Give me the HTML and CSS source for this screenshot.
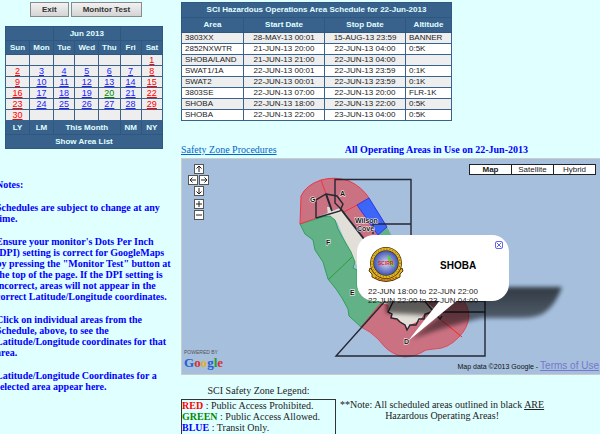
FILE: index.html
```html
<!DOCTYPE html>
<html lang="en">
<head>
  <meta charset="UTF-8">
  <meta name="viewport" content="width=device-width, initial-scale=1.0">
  <title>SCI Hazardous Operations Area Schedule</title>
  <link rel="stylesheet" href="styles.css">
</head>
<body>
  <div class="page">
    <div class="sidebar">
      <div class="buttons">
        <button type="button">Exit</button>
        <button type="button">Monitor Test</button>
      </div>

      <table class="calendar">
        <colgroup>
          <col class="wide"><col class="wide"><col><col class="wide"><col><col><col>
        </colgroup>
        <thead>
          <tr><th colspan="2"></th><th colspan="3">Jun 2013</th><th colspan="2"></th></tr>
          <tr><th>Sun</th><th>Mon</th><th>Tue</th><th>Wed</th><th>Thu</th><th>Fri</th><th>Sat</th></tr>
        </thead>
        <tbody>
          <tr><td></td><td></td><td></td><td></td><td></td><td></td><td><a class="weekend" href="#">1</a></td></tr>
          <tr><td><a class="weekend" href="#">2</a></td><td><a href="#">3</a></td><td><a href="#">4</a></td><td><a href="#">5</a></td><td><a href="#">6</a></td><td><a href="#">7</a></td><td><a class="weekend" href="#">8</a></td></tr>
          <tr><td><a class="weekend" href="#">9</a></td><td><a href="#">10</a></td><td><a href="#">11</a></td><td><a href="#">12</a></td><td><a href="#">13</a></td><td><a href="#">14</a></td><td><a class="weekend" href="#">15</a></td></tr>
          <tr><td><a class="weekend" href="#">16</a></td><td><a href="#">17</a></td><td><a href="#">18</a></td><td><a href="#">19</a></td><td><a class="today" href="#">20</a></td><td><a href="#">21</a></td><td><a class="weekend" href="#">22</a></td></tr>
          <tr><td><a class="weekend" href="#">23</a></td><td><a href="#">24</a></td><td><a href="#">25</a></td><td><a href="#">26</a></td><td><a href="#">27</a></td><td><a href="#">28</a></td><td><a class="weekend" href="#">29</a></td></tr>
          <tr><td><a class="weekend" href="#">30</a></td><td></td><td></td><td></td><td></td><td></td><td></td></tr>
        </tbody>
        <tfoot>
          <tr><th>LY</th><th>LM</th><th colspan="3">This Month</th><th>NM</th><th>NY</th></tr>
          <tr><th colspan="7">Show Area List</th></tr>
        </tfoot>
      </table>

      <div class="notes">
        <p>Notes:</p>
        <p>Schedules are subject to change at any<br>time.</p>
        <p>Ensure your monitor's Dots Per Inch<br>(DPI) setting is correct for GoogleMaps<br>by pressing the "Monitor Test" button at<br>the top of the page. If the DPI setting is<br>incorrect, areas will not appear in the<br>correct Latitude/Longitude coordinates.</p>
        <p>Click on individual areas from the<br>Schedule, above, to see the<br>Latitude/Longitude coordinates for that<br>area.</p>
        <p>Latitude/Longitude Coordinates for a<br>selected area appear here.</p>
      </div>
    </div>

    <div class="main">
      <table class="schedule">
        <colgroup>
          <col class="area"><col class="date"><col class="date"><col class="altitude">
        </colgroup>
        <thead>
          <tr><th colspan="4">SCI Hazardous Operations Area Schedule for 22-Jun-2013</th></tr>
          <tr><th>Area</th><th>Start Date</th><th>Stop Date</th><th>Altitude</th></tr>
        </thead>
        <tbody>
          <tr><td>3803XX</td><td>28-MAY-13 00:01</td><td>15-AUG-13 23:59</td><td>BANNER</td></tr>
          <tr><td>2852NXWTR</td><td>21-JUN-13 20:00</td><td>22-JUN-13 04:00</td><td>0:5K</td></tr>
          <tr><td>SHOBA/LAND</td><td>21-JUN-13 21:00</td><td>22-JUN-13 04:00</td><td></td></tr>
          <tr><td>SWAT1/1A</td><td>22-JUN-13 00:01</td><td>22-JUN-13 23:59</td><td>0:1K</td></tr>
          <tr><td>SWAT2</td><td>22-JUN-13 00:01</td><td>22-JUN-13 23:59</td><td>0:1K</td></tr>
          <tr><td>3803SE</td><td>22-JUN-13 07:00</td><td>22-JUN-13 20:00</td><td>FLR-1K</td></tr>
          <tr><td>SHOBA</td><td>22-JUN-13 18:00</td><td>22-JUN-13 22:00</td><td>0:5K</td></tr>
          <tr><td>SHOBA</td><td>22-JUN-13 22:00</td><td>23-JUN-13 04:00</td><td>0:5K</td></tr>
        </tbody>
      </table>

      <div class="map-heading">
        <a href="#">Safety Zone Procedures</a>
        <strong>All Operating Areas in Use on 22-Jun-2013</strong>
      </div>

      <div class="map">
        <svg class="areas" width="419" height="215" viewBox="181 159 419 215">
          <defs>
            <filter id="soft" x="-20%" y="-40%" width="140%" height="180%"><feGaussianBlur stdDeviation="2"/></filter>
            <linearGradient id="fade" x1="0" y1="0" x2="0" y2="1"><stop offset="0" stop-opacity="0.7"/><stop offset="1" stop-opacity="0.4"/></linearGradient>
          </defs>
          <!-- island -->
          <path d="M328 211 L340 207 L364 238 L395 290 L436 300 L438 311 L425 314 L420 321 L411 325 L407 330 L400 322 L392 318 L388 311 L379 304 L355 262 L343 236 L337 222 L326 216Z" fill="#e2ded8"/>
          <!-- green zones -->
          <path d="M300 224 L322 217 L330 216 L335 220 L338 229 L344 240 L351 252 L355 262 L353 268 L357 270 L357 288 L368 300 L382 303 L361 327 L349 316 L348 309 L342 298 L336 289 L328 279 L323 262 L315 250 L313 240 L305 234Z" fill="#62b187" stroke="#2ea15a"/>
          <path d="M378 235 L387 227 L394 240 L382 240Z" fill="#62b187"/>
          <path d="M328 280 L352 257" stroke="#2a9d32" fill="none"/>
          <!-- red zones -->
          <path d="M300 224 L301 196 Q306 185 321 180 Q335 176 349 181 Q362 187 369 198 L357 205 L378 235 L378 240 L364 239 L340 208 L317 217Z" fill="#ca7182"/>
          <path d="M300 224 L301 196 Q306 185 321 180 Q335 176 349 181 Q362 187 369 198 M321 180 L326 194 M344 212 L357 205 M300 224 L316 218" fill="none" stroke="#ef3544"/>
          <path d="M346 214 L345 220 L349 221 L350 230 L354 231 L357 237 L362 237Z" fill="#e2ded8"/>
          <path d="M327 207 L331 207 L333 210 L334 214 L328 215Z" fill="#e2ded8"/>
          <path d="M361 327 L380 304 L388 305 L388 311 L392 318 L400 322 L405 325 L407 330 L411 325 L420 321 L425 314 L436 309 L425 300 L463 300 Q469 307 469 316 Q468 328 459 337 Q448 349 434 349 L426 350 Q415 357 404 357 Q391 354 384 346 L378 339 Q370 331 361 327Z" fill="#ca7182" stroke="#ef3544" stroke-width="0.8"/>
          <path d="M440 319 L462 337" stroke="#f22" fill="none"/>
          <!-- blue zone -->
          <path d="M357 205 L369 198 L387 227 L378 235Z" fill="#3c66f8" stroke="#3034e8"/>
          <!-- scheduled area outlines -->
          <g fill="none" stroke="#252733" stroke-width="1.4">
            <path d="M340 208 L335 203 V179.500 H411 V236 M373 234 V224 H411 M411 301 H485 V356 H336 L386 300 M440 312 H485"/>
            <path d="M316 218 V200 L326 194 L337 196 L343 204 L340 211 L316 218"/>
            <path d="M326 194 L332 211 M340 208 L364 239" stroke-width="2"/>
            <path d="M394 300 L388 312 L392 314 L391 318 L397 319 L400 322 L405 325 L407 330 L410 325 L416 325 L419 319 L424 319 L425 314 L433 312 L436 309 M422 298 L440 319 L442 316"/>
          </g>
          <!-- shadow -->
          <g filter="url(#soft)">
            <path d="M386 300 L401 287 H562 Q555 306 544 313 Q537 318 520 318 H482 Q450 325 412 339 Q426 325 441 316 L386 313Z" fill="url(#fade)"/>
          </g>
          <!-- bubble pointer -->
          <path d="M441 299 H459 L408 341Z" fill="#fff"/>
          <g class="area-labels">
            <text x="310" y="202">G</text>
            <text x="340" y="196">A</text>
            <text x="326" y="245">F</text>
            <text x="350" y="295">E</text>
            <text x="404" y="344">D</text>
            <text x="355" y="223">Wilson</text>
            <text x="357" y="231">Cove</text>
          </g>
        </svg>

        <div class="map-nav">
          <button type="button" class="up" aria-label="Pan up"><svg viewBox="0 0 8 8"><path d="M4 7V1M1.500 3.500L4 1L6.500 3.500"/></svg></button>
          <button type="button" class="left" aria-label="Pan left"><svg viewBox="0 0 8 8"><path d="M7 4H1M3.500 1.500L1 4L3.500 6.500"/></svg></button>
          <button type="button" class="right" aria-label="Pan right"><svg viewBox="0 0 8 8"><path d="M1 4H7M4.500 1.500L7 4L4.500 6.500"/></svg></button>
          <button type="button" class="down" aria-label="Pan down"><svg viewBox="0 0 8 8"><path d="M4 1V7M1.500 4.500L4 7L6.500 4.500"/></svg></button>
          <button type="button" class="zoom-in" aria-label="Zoom in"><svg viewBox="0 0 8 8"><path d="M4 1V7M1 4H7"/></svg></button>
          <button type="button" class="zoom-out" aria-label="Zoom out"><svg viewBox="0 0 8 8"><path d="M1 4H7"/></svg></button>
        </div>

        <div class="map-types">
          <button type="button" class="active">Map</button>
          <button type="button">Satellite</button>
          <button type="button">Hybrid</button>
        </div>

        <div class="bubble">
          <button type="button" class="close" aria-label="Close"><svg viewBox="0 0 8 8"><path d="M1 1L7 7M7 1L1 7"/></svg></button>
          <div class="bubble-head">
            <svg class="seal" width="36" height="36" viewBox="0 0 36 36">
              <defs>
                <radialGradient id="globe"><stop offset="0" stop-color="#d5d9f5"/><stop offset="1" stop-color="#4657b5"/></radialGradient>
              </defs>
              <path d="M2 21 L6 24 Q18 34 30 24 L34 21 L35 24 L32 27 L32 30 Q18 39 4 30 L4 27 L1 24Z" fill="#dfb51c" stroke="#5a3512"/>
              <circle cx="18" cy="16" r="14" fill="#3c4a9c" stroke="#4a3208" stroke-width="4"/>
              <circle cx="18" cy="16" r="14" fill="none" stroke="#e2bd1f" stroke-width="2.500"/>
              <circle cx="18" cy="16" r="14" fill="none" stroke="#8d3a1a" stroke-width="1" stroke-dasharray="1 2"/>
              <circle cx="18" cy="16" r="12" fill="url(#globe)"/>
              <path d="M7 30 Q18 36 29 30" fill="none" stroke="#a32a18" stroke-dasharray="2 1"/>
              <path d="M19 8 L22 10 L24 15 L27 19 L25 20 L21 15Z" fill="#49d83a"/>
              <text x="10" y="18">SCIRR</text>
            </svg>
            <strong>SHOBA</strong>
          </div>
          <div>22-JUN 18:00 to 22-JUN 22:00</div>
          <div>22-JUN 22:00 to 23-JUN 04:00</div>
        </div>

        <div class="powered">
          <small>POWERED BY</small>
          <span class="google"><span class="b">G</span><span class="r">o</span><span class="y">o</span><span class="b">g</span><span class="g">l</span><span class="r">e</span></span>
        </div>
        <div class="copyright">Map data ©2013 Google - <a href="#">Terms of Use</a></div>
      </div>

      <div class="legend">
        <div class="legend-left">
          <div class="legend-title">SCI Safety Zone Legend:</div>
          <div class="legend-box">
            <div><b class="red">RED</b> : Public Access Prohibited.</div>
            <div><b class="green">GREEN</b> : Public Access Allowed.</div>
            <div><b class="blue">BLUE</b> : Transit Only.</div>
          </div>
        </div>
        <div class="legend-note">**Note: All scheduled areas outlined in black <u>ARE</u><br>Hazardous Operating Areas!</div>
      </div>
    </div>
  </div>
</body>
</html>
```

FILE: styles.css
```css
body {
  margin: 0;
  background: #e0ffff;
  color: #222;
  font-family: "Liberation Serif", "Times New Roman", serif;
  font-size: 10px;
  line-height: 11px;
  overflow: hidden;
}
button {
  box-sizing: border-box;
  padding: 0;
  font-family: "Liberation Sans", Arial, sans-serif;
}
.page {
  display: grid;
  grid-template-columns: 181px 1fr;
}
.sidebar {
  padding-top: 2px;
}
.buttons {
  display: flex;
  gap: 2px;
  padding-left: 30px;
}
.buttons button {
  height: 15px;
  padding: 0 11px;
  border: 1px solid #8a8a8a;
  background: linear-gradient(#f2f2f2, #d4d4d4);
  color: #333;
  font-size: 8px;
  font-weight: bold;
}

/* tables */
.calendar,
.schedule {
  border-collapse: collapse;
  table-layout: fixed;
  font-family: "Liberation Sans", Arial, sans-serif;
  font-size: 9px;
  line-height: 10px;
}
.calendar th,
.schedule th {
  height: 13px;
  padding: 0;
  border: 1px solid #2f5880;
  background: #38628c;
  color: #e0ffff;
  font-size: 8px;
}
.calendar td,
.schedule td {
  height: 10px;
  padding: 0;
  border: 1px solid #38628c;
}
.calendar {
  width: 158px;
  margin: 9px 0 0 5px;
}
.calendar td {
  background: #eee;
  text-align: center;
}
.calendar col.wide {
  width: 24px;
}
.calendar a {
  color: #22f;
}
.calendar a.weekend {
  color: #f00;
}
.calendar a.today {
  color: #080;
}
.schedule {
  width: 271px;
  margin-top: 2px;
  font-size: 8px;
}
.schedule th {
  height: 14px;
}
.schedule tbody tr:nth-child(odd) {
  background: #eee;
}
.schedule tbody tr:nth-child(even) {
  background: #fff;
}
.schedule td {
  padding: 0 3px;
}
.schedule td:nth-child(2),
.schedule td:nth-child(3) {
  padding: 0;
  text-align: center;
}
.schedule .area {
  width: 62px;
}
.schedule .date {
  width: 81px;
}

.notes {
  margin: 30px 0 0 -4px;
  color: #00f;
  font-weight: bold;
  white-space: nowrap;
}
.notes p {
  margin: 0 0 12px;
}

.map-heading {
  display: flex;
  justify-content: space-between;
  padding: 23px 72px 3px 0;
}
.map-heading a {
  color: #06c;
}
.map-heading strong {
  color: #00f;
}

/* map */
.map {
  position: relative;
  height: 215px;
  border: 1px solid #ccc;
  border-width: 1px 0 1px 1px;
  background: #a5bfdd;
  font-family: "Liberation Sans", Arial, sans-serif;
}
.areas {
  display: block;
  margin-left: -1px;
}
.area-labels text {
  fill: #111;
  stroke: #fff;
  stroke-width: 1px;
  paint-order: stroke;
  font-size: 7px;
  font-weight: bold;
}
.map-nav {
  position: absolute;
  top: 5px;
  left: 6px;
  display: grid;
  grid-template-columns: 10px 10px;
  grid-auto-rows: 10px;
  gap: 1px;
}
.map-nav button {
  width: 10px;
  height: 10px;
  border: 1px solid #555;
  background: #fff;
}
.map-nav svg,
.close svg {
  display: block;
  fill: none;
  stroke: #222;
}
.map-nav .up,
.map-nav .down,
.map-nav .zoom-in,
.map-nav .zoom-out {
  grid-column: 1 / 3;
  justify-self: center;
}
.map-nav .zoom-in,
.map-nav .zoom-out {
  margin-top: 2px;
}
.map-types {
  position: absolute;
  top: 5px;
  right: 4px;
  display: flex;
}
.map-types button {
  width: 43px;
  height: 11px;
  margin-left: -1px;
  border: 1px solid #222;
  background: #fff;
  color: #222;
  font-size: 8px;
  line-height: 9px;
}
.map-types .active {
  font-weight: bold;
}
.bubble {
  position: absolute;
  top: 76px;
  left: 175px;
  box-sizing: border-box;
  width: 152px;
  height: 66px;
  padding: 12px 11px 0;
  border-radius: 17px;
  background: #fff;
  color: #222;
  font-size: 8px;
  line-height: 9px;
  white-space: nowrap;
}
.bubble-head {
  display: flex;
  align-items: center;
  gap: 36px;
  padding-bottom: 4px;
}
.bubble-head strong {
  color: #000;
  font-size: 10px;
}
.seal text {
  fill: #e22;
  font-size: 5px;
  font-weight: bold;
}
.close {
  position: absolute;
  top: 6px;
  right: 6px;
  width: 8px;
  height: 8px;
  border: 1px solid #66e;
  border-radius: 2px;
  background: #fff;
}
.close svg {
  stroke: #33c;
}
.powered {
  position: absolute;
  bottom: 4px;
  left: 2px;
  color: #555;
}
.powered small {
  display: block;
  font-size: 5px;
  line-height: 5px;
}
.google {
  display: block;
  font-family: "Liberation Serif", serif;
  font-size: 13px;
  font-weight: bold;
  line-height: 15px;
}
.google .b { color: #2460d0; }
.google .r { color: #d8302c; }
.google .y { color: #e8b020; }
.google .g { color: #259b3c; }
.copyright {
  position: absolute;
  right: 1px;
  bottom: 2px;
  color: #111;
  font-size: 7px;
}
.copyright a {
  color: #77c;
  font-size: 10px;
}

.legend {
  display: flex;
  gap: 4px;
  padding-top: 10px;
}
.legend-title {
  padding-bottom: 3px;
  text-align: center;
}
.legend-box {
  width: 153px;
  height: 40px;
  border: 1px solid #333;
}
.red { color: #f00; }
.green { color: #080; }
.blue { color: #00f; }
.legend-note {
  padding-top: 14px;
  text-align: center;
}
```
